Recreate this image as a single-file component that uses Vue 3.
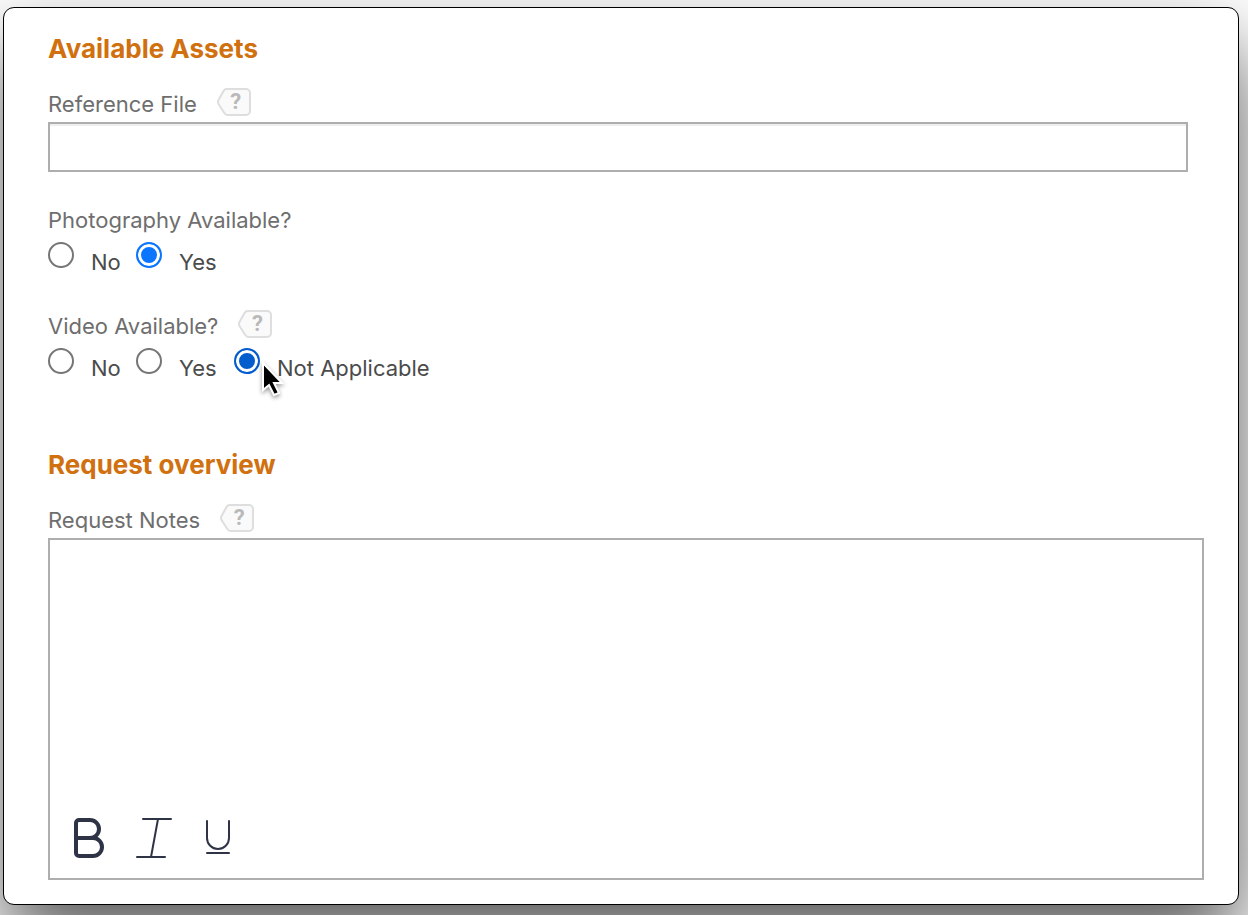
<script setup>
import { ref } from 'vue'

const referenceFile = ref('')
const notes = ref('')
const photography = ref('yes')
const video = ref('na')

const photoOptions = [
  { value: 'no', label: 'No' },
  { value: 'yes', label: 'Yes' },
]
const videoOptions = [...photoOptions, { value: 'na', label: 'Not Applicable' }]
</script>

<template>
  <main class="backdrop">
    <form class="panel" @submit.prevent>
      <section>
        <h2>Available Assets</h2>
        <div class="field">
          <div class="caption">
            <label for="reference-file">Reference File</label>
            <button type="button" class="help">
              <svg viewBox="0 0 34 28" aria-hidden="true"><path d="M9.500 1H29a4 4 0 0 1 4 4v18a4 4 0 0 1-4 4H10.500q-2 0-3.200-2L1.500 16q-1-2 0-4L6.500 3q1.200-2 3-2z" /></svg>
              <span>?</span>
            </button>
          </div>
          <input id="reference-file" v-model="referenceFile" class="text-box" type="text" />
        </div>

        <div class="field" role="radiogroup" aria-labelledby="photo-caption">
          <div id="photo-caption" class="caption">Photography Available?</div>
          <div class="choices">
            <label v-for="o in photoOptions" :key="o.value">
              <input v-model="photography" type="radio" name="photography" :value="o.value" />
              <span>{{ o.label }}</span>
            </label>
          </div>
        </div>

        <div class="field" role="radiogroup" aria-labelledby="video-caption">
          <div class="caption">
            <span id="video-caption">Video Available?</span>
            <button type="button" class="help">
              <svg viewBox="0 0 34 28" aria-hidden="true"><path d="M9.500 1H29a4 4 0 0 1 4 4v18a4 4 0 0 1-4 4H10.500q-2 0-3.200-2L1.500 16q-1-2 0-4L6.500 3q1.200-2 3-2z" /></svg>
              <span>?</span>
            </button>
          </div>
          <div class="choices">
            <label v-for="o in videoOptions" :key="o.value" :class="{ hovered: o.value === 'na' }">
              <input v-model="video" type="radio" name="video" :value="o.value" />
              <span>{{ o.label }}</span>
              <svg v-if="o.value === 'na'" class="pointer" viewBox="0 0 26 40" aria-hidden="true">
                <path d="M3 2v27l6-5 5 10 5-2-5-10h8z" />
              </svg>
            </label>
          </div>
        </div>
      </section>

      <section class="overview">
        <h2>Request overview</h2>
        <div class="caption">
          <label for="request-notes">Request Notes</label>
          <button type="button" class="help">
            <svg viewBox="0 0 34 28" aria-hidden="true"><path d="M9.500 1H29a4 4 0 0 1 4 4v18a4 4 0 0 1-4 4H10.500q-2 0-3.200-2L1.500 16q-1-2 0-4L6.500 3q1.200-2 3-2z" /></svg>
            <span>?</span>
          </button>
        </div>
        <div class="editor">
          <textarea id="request-notes" v-model="notes"></textarea>
          <div class="tools">
            <button type="button" aria-label="Bold">
              <svg width="32" height="40" viewBox="0 0 32 40"><path d="M2 5v30a3 3 0 0 0 3 3h14a9 9 0 0 0 0-18H2h14a9 9 0 0 0 0-18H5a3 3 0 0 0-3 3z" stroke-width="4" /></svg>
            </button>
            <button type="button" aria-label="Italic">
              <svg width="38" height="40" viewBox="0 0 38 40"><path d="M7 1h28M1 39h28M22 1l-7 38" stroke-width="2" stroke-linecap="round" /></svg>
            </button>
            <button type="button" aria-label="Underline">
              <svg width="28" height="40" viewBox="0 0 28 40"><path d="M3 3v17a11 11 0 0 0 22 0V3M3 35h22" stroke-width="2" stroke-linecap="round" /></svg>
            </button>
          </div>
        </div>
      </section>
    </form>
  </main>
</template>

<style>
body {
  background: #fff;
}
</style>

<style scoped>
.backdrop {
  box-sizing: border-box;
  min-height: 100vh;
  padding: 7px 9px 10px 3px;
  display: flex;
  overflow: hidden;
  font-family: Inter, "Open Sans", sans-serif;
  font-size: 22px;
  line-height: 28px;
  color: #6e6e6e;
}
.panel {
  box-sizing: border-box;
  flex: 1;
  display: flex;
  flex-direction: column;
  padding: 24px 34px 24px 44px;
  background: #fff;
  border: 1px solid #000;
  border-radius: 11px;
  box-shadow: 0 38px 80px rgba(0, 0, 0, 0.65);
}
h2 {
  margin: 0 0 22px;
  font-size: 26px;
  line-height: 34px;
  font-weight: 700;
  color: #d0700f;
}
.field {
  margin-bottom: 32px;
}
.caption {
  box-sizing: border-box;
  display: flex;
  align-items: center;
  gap: 20px;
  height: 34px;
  padding-bottom: 2px;
}
.help {
  position: relative;
  width: 34px;
  height: 28px;
  margin-bottom: 4px;
  padding: 0;
  border: 0;
  background: none;
  font-family: Roboto, sans-serif;
  font-size: 22px;
  line-height: 28px;
  font-weight: 700;
  color: #b9b9b9;
}
.help svg {
  position: absolute;
  inset: 0;
  fill: #fafafa;
  stroke: #dedede;
  stroke-width: 2;
}
.help span {
  position: relative;
  padding-left: 4px;
}
.text-box {
  display: block;
  box-sizing: border-box;
  width: calc(100% - 16px);
  height: 50px;
  padding: 0 12px;
  border: 2px solid #aeaeae;
  background: #fff;
  box-shadow: inset 0 2px 1px #eee;
  font: inherit;
  outline: 0;
}
.choices {
  display: grid;
  grid-template-columns: 88px 98px auto;
  justify-content: start;
  height: 40px;
  color: #4b4b4b;
}
.choices label {
  position: relative;
  display: flex;
  align-items: flex-start;
  gap: 17px;
}
.choices label span {
  padding-top: 10px;
}
.choices input {
  appearance: none;
  flex: none;
  width: 26px;
  height: 26px;
  margin: 4px 0 0;
  border: 2px solid #767676;
  border-radius: 50%;
  background: #fff;
}
.choices input:checked {
  border-color: #0a75ff;
  background: #0a75ff;
  box-shadow: inset 0 0 0 3px #fff;
}
.choices .hovered input:checked {
  border-color: #045dcc;
  background: #045dcc;
}
.pointer {
  position: absolute;
  left: 26px;
  top: 17px;
  width: 26px;
  height: 40px;
  overflow: visible;
  fill: #000;
  stroke: #fff;
  stroke-width: 2;
  filter: drop-shadow(0 2px 2px rgba(0, 0, 0, 0.4));
}
.overview {
  flex: 1;
  display: flex;
  flex-direction: column;
  padding-top: 32px;
}
.editor {
  flex: 1;
  display: flex;
  flex-direction: column;
  border: 2px solid #aeaeae;
}
textarea {
  flex: 1;
  padding: 12px;
  border: 0;
  outline: 0;
  resize: none;
  background: transparent;
  font: inherit;
}
.tools {
  display: flex;
  gap: 30px;
  padding: 0 24px 20px;
}
.tools button {
  padding: 0;
  border: 0;
  background: none;
}
.tools svg {
  display: block;
  fill: none;
  stroke: #2e3446;
}
</style>
